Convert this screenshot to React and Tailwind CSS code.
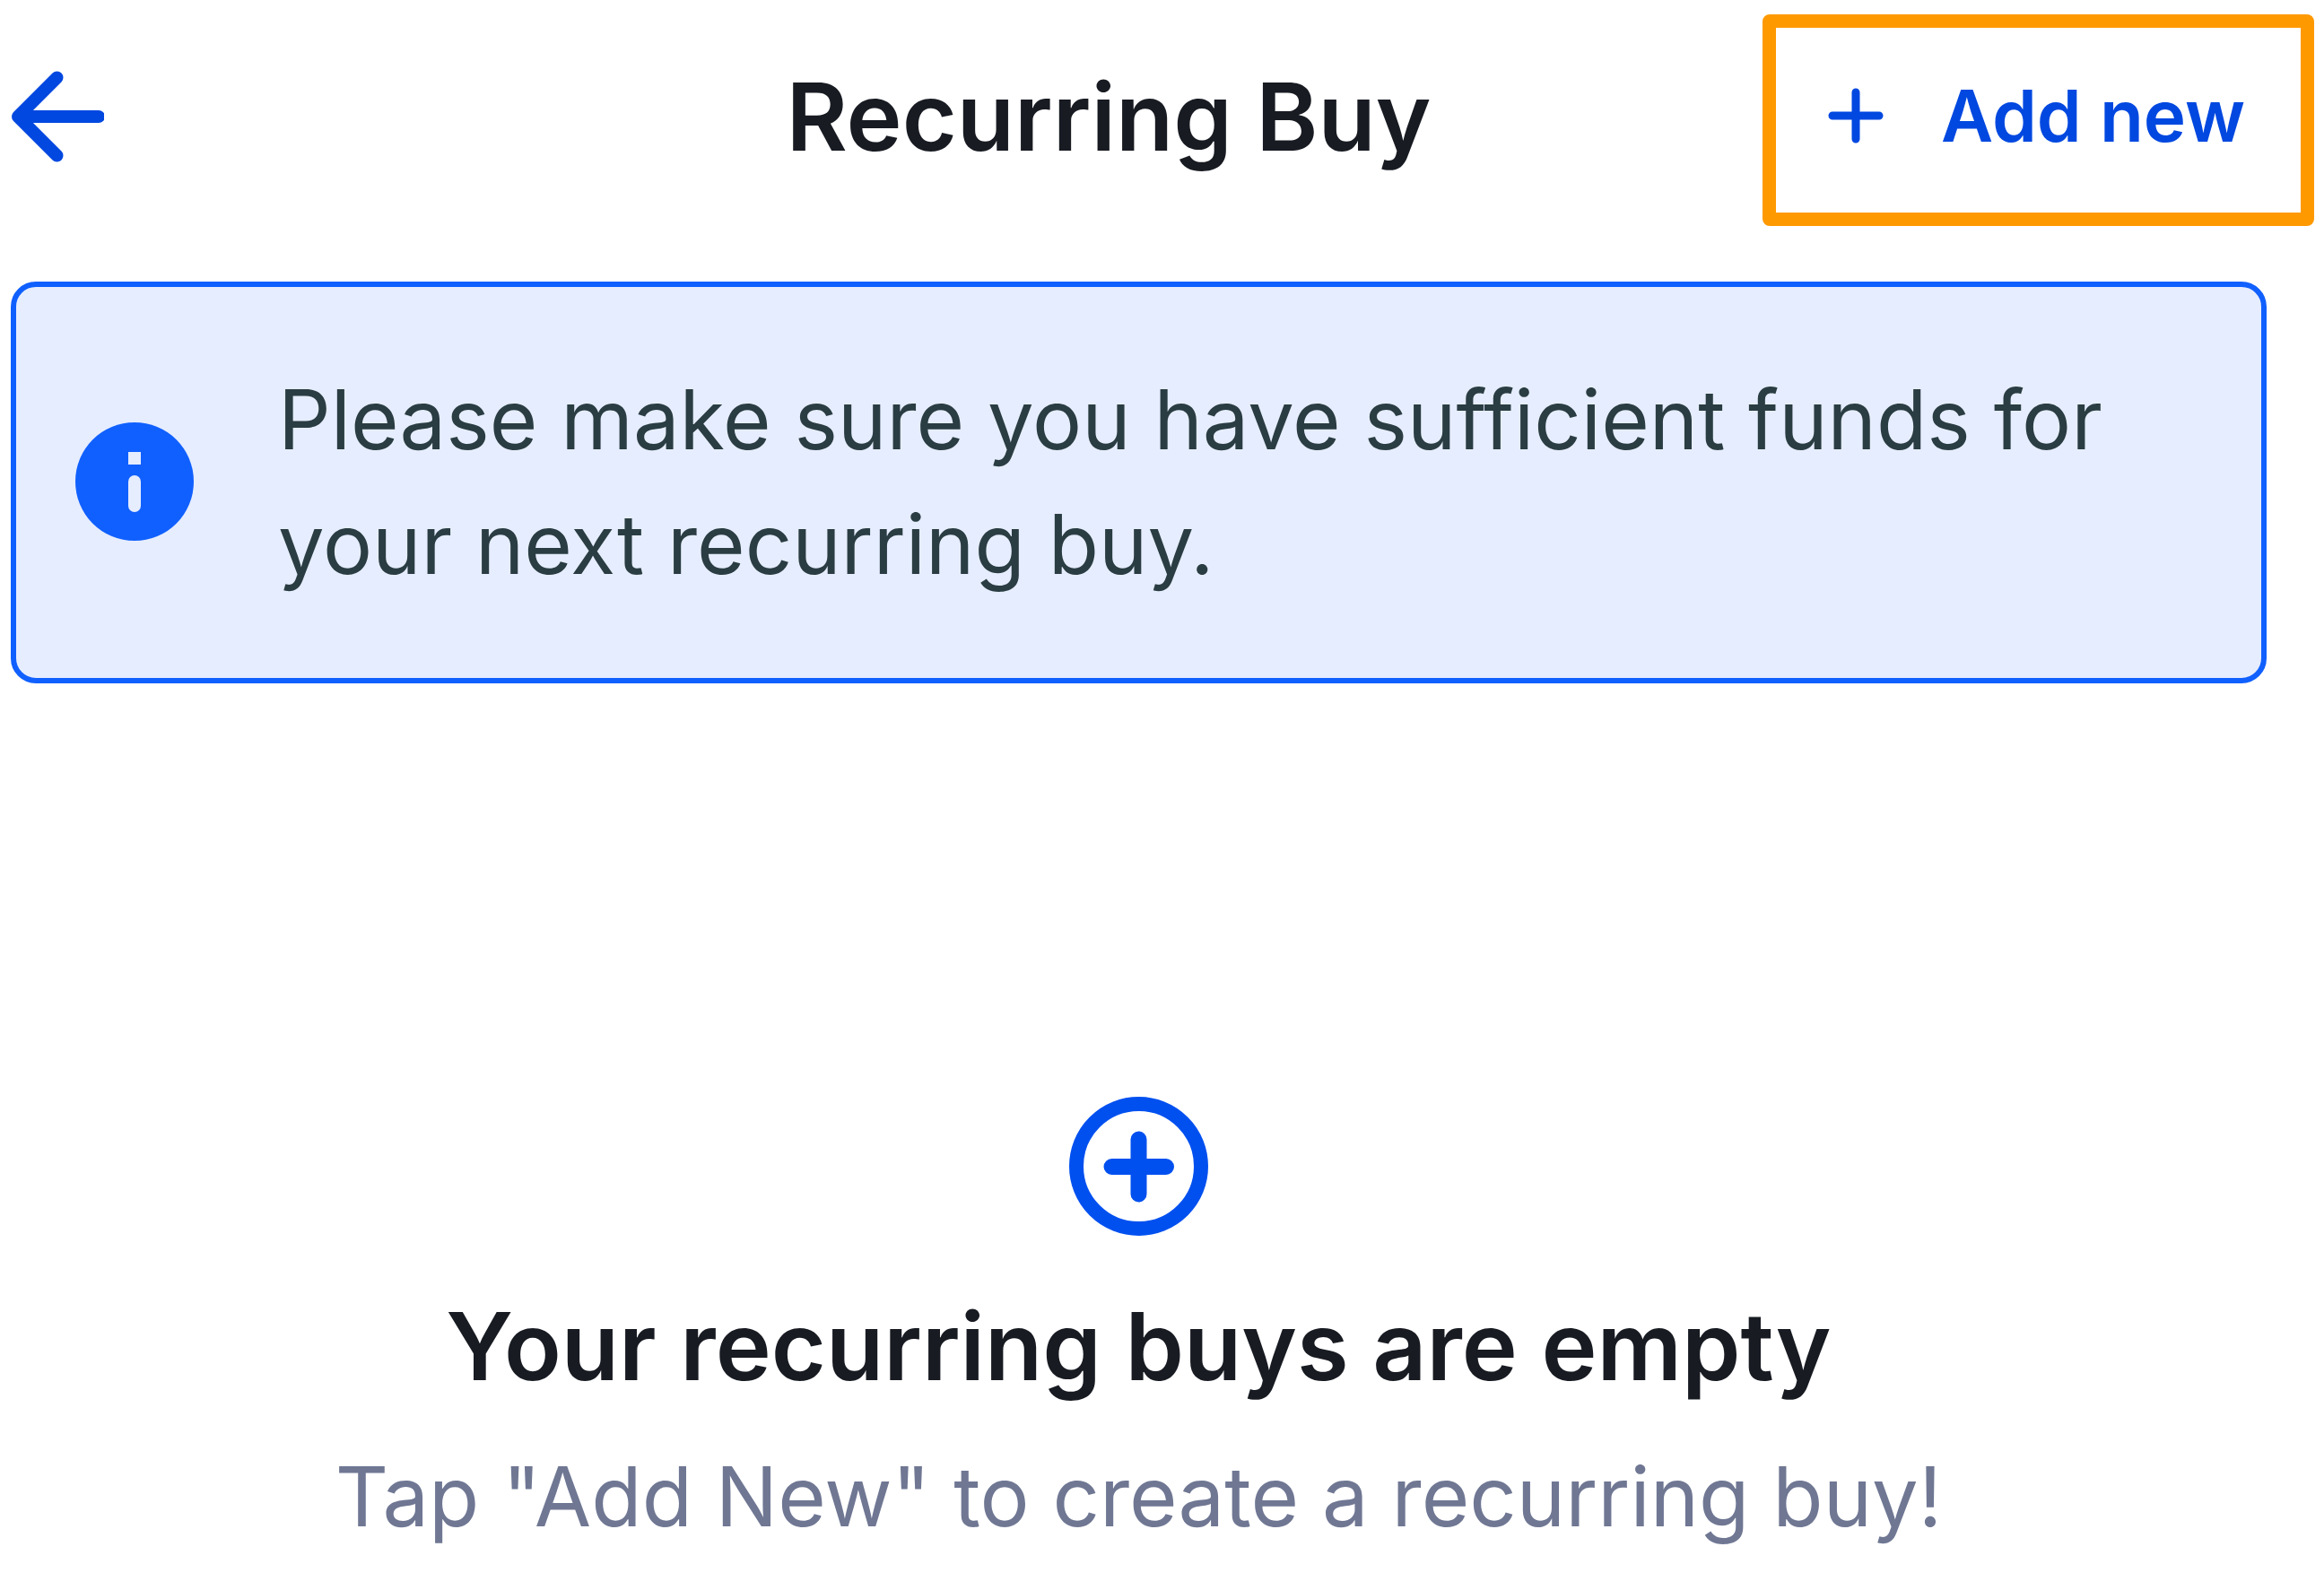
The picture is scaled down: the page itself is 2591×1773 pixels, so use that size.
export default function App() {
  return (
    <main className="min-h-screen w-full bg-white font-['Inter',sans-serif]">
      <header className="flex items-start justify-between pl-3 pr-[11px] pt-4">
        <div className="flex flex-1 pt-[62px]">
          <button type="button" aria-label="Back" className="text-[#0048e0]">
            <svg viewBox="0 0 104 104" fill="none" stroke="currentColor" strokeWidth="14" strokeLinecap="round" strokeLinejoin="round" className="h-[104px] w-[104px]">
              <path d="M98 52H8M51.5 8.5L8 52L51.5 95.5" />
            </svg>
          </button>
        </div>
        <h1 className="mt-[46px] pr-[120px] text-[105px] leading-[136px] font-semibold text-[#181b22]">Recurring Buy</h1>
        <div className="flex flex-1 justify-end">
          <button type="button" className="flex h-[236px] w-[615px] items-center justify-center gap-16 rounded-lg border-[15px] border-[#ff9900] pr-1 pb-[10px] text-[80px] font-semibold text-[#0048e0]">
            <svg viewBox="0 0 62 62" fill="none" stroke="currentColor" strokeWidth="9" strokeLinecap="round" className="h-[62px] w-[62px]">
              <path d="M31 5V57M5 31H57" />
            </svg>
            Add new
          </button>
        </div>
      </header>
      <section className="ml-3 mr-16 mt-[62px] flex items-center rounded-[28px] border-[6px] border-[#1060ff] bg-[#e6edff] px-[66px] pt-[78px] pb-[80px]">
        <svg viewBox="0 0 132 132" className="h-[132px] w-[132px] shrink-0">
          <circle cx="66" cy="66" r="66" fill="#1060ff" />
          <path d="M59 33h14v14h-14z" fill="#e6edff" />
          <rect x="59" y="59" width="14" height="41" rx="7" fill="#e6edff" />
        </svg>
        <p className="ml-[94px] text-[92px] leading-[139px] text-[#2a3d42]">Please make sure you have sufficient funds for your next recurring buy.</p>
      </section>
      <section className="ml-3 mr-16 mt-[461px] flex flex-col items-center text-center">
        <svg viewBox="0 0 155 155" fill="none" stroke="#0050f0" strokeWidth="16" strokeLinecap="round" className="h-[155px] w-[155px]">
          <circle cx="77.5" cy="77.5" r="69.5" />
          <path strokeWidth="18" d="M77.5 47.5V108.5M47.5 78H108" />
        </svg>
        <h2 className="mt-[55px] text-[105px] leading-[136px] font-semibold text-[#181b22]">Your recurring buys are empty</h2>
        <p className="mt-8 text-[92px] leading-[136px] text-[#6f7793]">Tap "Add New" to create a recurring buy!</p>
      </section>
    </main>
  );
}
